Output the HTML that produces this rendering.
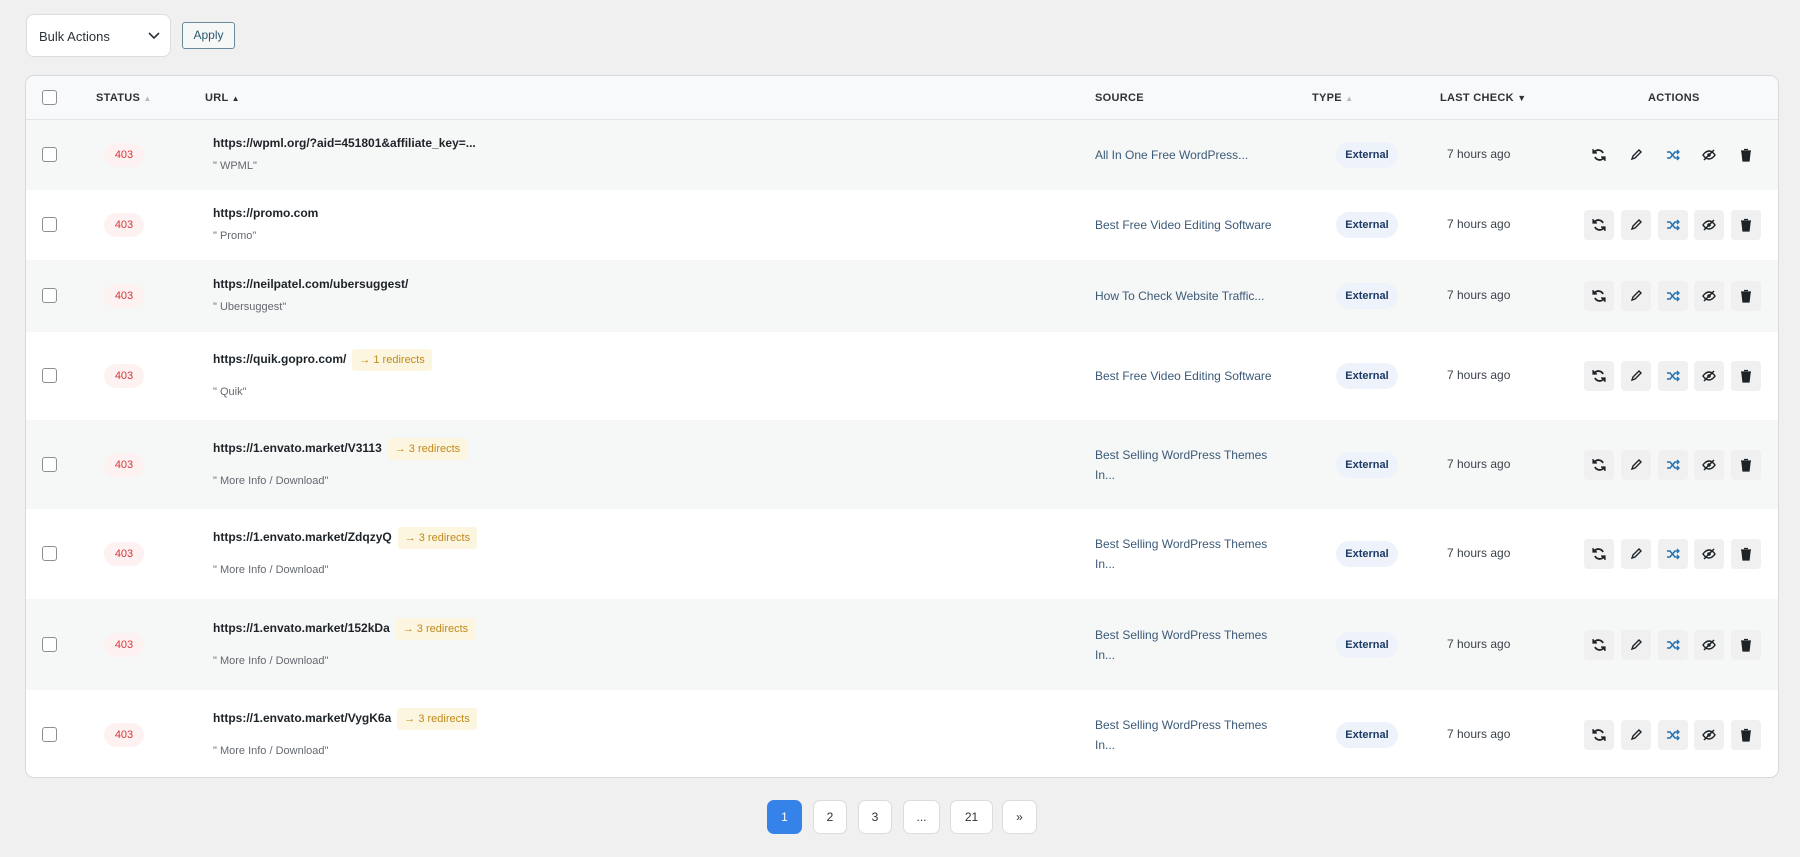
<!DOCTYPE html>
<html><head><style>
*{box-sizing:border-box;margin:0;padding:0}
body{width:1800px;height:857px;background:#f0f0f1;font-family:"Liberation Sans",sans-serif;color:#1d2327;position:relative;overflow:hidden}
.sel{position:absolute;left:26px;top:14px;width:145px;height:43px;background:#fff;border:1px solid #dcdcde;border-radius:8px;font-size:13px;padding:14px 12px;color:#2c3338}
.sel svg{position:absolute;right:10px;top:17px}
.apply{position:absolute;left:182px;top:22px;width:53px;height:27px;border:1px solid #6a8a9c;border-radius:3px;background:#f6f7f7;color:#2c5a72;font-size:12px;text-align:center;line-height:25px}
.tbl{position:absolute;left:25px;top:75px;width:1754px;height:703px;background:#fff;border:1px solid #d7d9dc;border-radius:9px;overflow:hidden}
.hdr{position:absolute;left:0;top:0;width:100%;height:44px;background:#f8f9fa;border-bottom:1px solid #e2e4e7}
.h{position:absolute;top:16px;font-size:11px;font-weight:bold;color:#2c3338;letter-spacing:.3px}
.cb{position:absolute;left:16px;width:15px;height:15px;border:1.5px solid #8c8f94;border-radius:3px;background:#fff}
.row{position:absolute;left:0;width:100%}
.g{background:#f6f7f7}
.st{position:absolute;left:78px;width:40px;height:24px;border-radius:12px;background:#fdf1f2;color:#d63638;font-size:11px;text-align:center;line-height:24px}
.url{position:absolute;left:187px;font-size:12px;font-weight:bold;color:#1d2327}
.red{display:inline-block;margin-left:6px;background:#fcf5e0;color:#c08a1c;font-weight:normal;font-size:11px;padding:5px 7px;border-radius:3px}
.sub{position:absolute;left:187px;font-size:11px;color:#646970}
.src{position:absolute;left:1069px;font-size:12px;color:#3c5a78;line-height:20px}
.ty{position:absolute;left:1310px;width:62px;height:26px;background:#eef3fb;border-radius:13px;color:#1d3a64;font-size:11px;font-weight:bold;text-align:center;line-height:26px}
.lc{position:absolute;left:1421px;font-size:12px;color:#3c434a}
.act{position:absolute;width:30px;height:30px;background:#f0f0f1;border-radius:4px}
.act svg{position:absolute;left:8px;top:8px}
.pg{position:absolute;top:800px;height:34px;background:#fff;border:1px solid #dcdcde;border-radius:7px;font-size:12px;text-align:center;line-height:32px;color:#2c3338}
</style></head><body>
<div class="sel">Bulk Actions<svg width="12" height="8" viewBox="0 0 12 8"><path d="M1 1l5 5 5-5" fill="none" stroke="#2c3338" stroke-width="1.6"/></svg></div>
<div class="apply">Apply</div>
<div class="tbl">
<div class="hdr">
<div class="cb" style="top:14px"></div>
<div class="h" style="left:70px">STATUS <span style="color:#bbb;font-size:8px">▲</span></div>
<div class="h" style="left:179px">URL <span style="font-size:8px">▲</span></div>
<div class="h" style="left:1069px">SOURCE</div>
<div class="h" style="left:1286px">TYPE <span style="color:#bbb;font-size:8px">▲</span></div>
<div class="h" style="left:1414px">LAST CHECK <span style="font-size:9px">▼</span></div>
<div class="h" style="left:1622px">ACTIONS</div>
</div>
<div id="rows"></div>
</div>
<div class="pg" style="left:767px;width:35px;background:#3582e9;border-color:#3582e9;color:#fff">1</div>
<div class="pg" style="left:813px;width:34px">2</div>
<div class="pg" style="left:858px;width:34px">3</div>
<div class="pg" style="left:903px;width:37px">...</div>
<div class="pg" style="left:950px;width:43px">21</div>
<div class="pg" style="left:1002px;width:35px">»</div>
<script>
var R=[
[44,70,"https://wpml.org/?aid=451801&amp;affiliate_key=...","",'" WPML"',"All In One Free WordPress..."],
[114,70,"https://promo.com","",'" Promo"',"Best Free Video Editing Software"],
[184,72,"https://neilpatel.com/ubersuggest/","",'" Ubersuggest"',"How To Check Website Traffic..."],
[256,88,"https://quik.gopro.com/","→ 1 redirects",'" Quik"',"Best Free Video Editing Software"],
[344,89,"https://1.envato.market/V3113","→ 3 redirects",'" More Info / Download"',"Best Selling WordPress Themes<br>In..."],
[433,90,"https://1.envato.market/ZdqzyQ","→ 3 redirects",'" More Info / Download"',"Best Selling WordPress Themes<br>In..."],
[523,91,"https://1.envato.market/152kDa","→ 3 redirects",'" More Info / Download"',"Best Selling WordPress Themes<br>In..."],
[614,89,"https://1.envato.market/VygK6a","→ 3 redirects",'" More Info / Download"',"Best Selling WordPress Themes<br>In..."]];
var ic=[
'<path d="M11 5A5 5 0 0 0 2.5 4M3 9a5 5 0 0 0 8.5 1" fill="none" stroke="#1d2327" stroke-width="1.8"/><path d="M1 1v4h4M13 13V9H9" fill="#1d2327" stroke="#1d2327" stroke-width="1.2"/>',
'<path d="M3 11l1-3 6-6 2 2-6 6z" fill="none" stroke="#1d2327" stroke-width="1.4"/>',
'<path d="M1 4h3l5 6h3M1 10h3l5-6h3" fill="none" stroke="#2271b1" stroke-width="1.5"/><path d="M11 2l2 2-2 2M11 8l2 2-2 2" fill="none" stroke="#2271b1" stroke-width="1.3"/>',
'<path d="M1 7s2.5-4 6-4 6 4 6 4-2.5 4-6 4-6-4-6-4z" fill="none" stroke="#1d2327" stroke-width="1.4"/><circle cx="7" cy="7" r="1.8" fill="#1d2327"/><path d="M2 12L12 2" stroke="#1d2327" stroke-width="1.5"/>',
'<path d="M3 4h8l-1 9H4z M2 3h10M5 1.5h4" fill="#1d2327" stroke="#1d2327" stroke-width="1.3"/>'];
var h="";R.forEach(function(r,i){var t=r[0],H=r[1],c=t+H/2;
h+='<div class="row'+(i%2==0?' g':'')+'" style="top:'+t+'px;height:'+H+'px"></div>';
h+='<div class="cb" style="top:'+(c-8)+'px"></div>';
h+='<div class="st" style="top:'+(c-12)+'px">403</div>';
var uy=r[3]?c-22:c-19;
h+='<div class="url" style="top:'+(r[3]?uy-5:uy)+'px">'+r[2]+(r[3]?'<span class="red">'+r[3]+'</span>':'')+'</div>';
h+='<div class="sub" style="top:'+(c+(r[3]?10:5))+'px">'+r[4]+'</div>';
h+='<div class="src" style="top:'+(c-(r[5].indexOf("<br>")>0?20:10))+'px">'+r[5]+'</div>';
h+='<div class="ty" style="top:'+(c-13)+'px">External</div>';
h+='<div class="lc" style="top:'+(c-8)+'px">7 hours ago</div>';
[1558,1595,1632,1668,1705].forEach(function(x,k){h+='<div class="act" style="left:'+x+'px;top:'+(c-15)+'px'+(i==0?';background:transparent':'')+'"><svg width="14" height="14" viewBox="0 0 14 14">'+ic[k]+'</svg></div>';});
});
document.getElementById("rows").innerHTML=h;
</script>
</body></html>
